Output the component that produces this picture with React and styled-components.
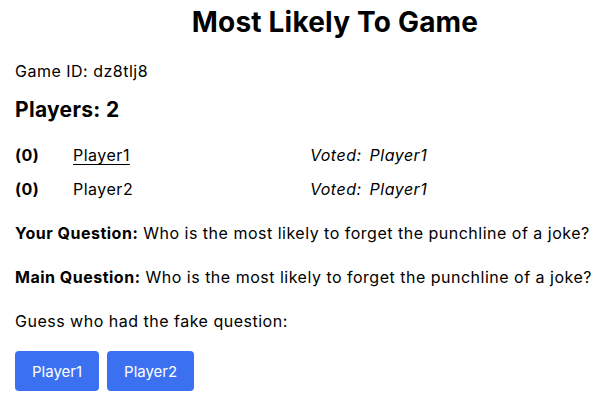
import React from 'react';
import styled, { createGlobalStyle } from 'styled-components';

const GlobalStyle = createGlobalStyle`
	body {
		margin: 0;
		background: #ffffff;
		color: #000000;
		font-family: Inter, 'Noto Sans', sans-serif;
	}
`;

const Page = styled.div`
	padding: 0 15px;
	font-size: 16px;
	letter-spacing: 0.5px;
`;

const Title = styled.h1`
	margin: 6px 0 0;
	padding-left: 62px;
	text-align: center;
	font-size: 28px;
	line-height: 32px;
	font-weight: 700;
	letter-spacing: 0.2px;
`;

const Text = styled.p`
	margin: ${(p) => p.$top || 16}px 0 0;
	line-height: 24px;
`;

const PlayersHeading = styled.h2`
	margin: 13px 0 0;
	font-size: 21px;
	line-height: 28px;
	font-weight: 700;
	letter-spacing: 0.3px;
`;

const PlayerList = styled.div`
	margin-top: 19px;
	display: flex;
	flex-direction: column;
	gap: 10px;
`;

const PlayerRow = styled.div`
	display: grid;
	grid-template-columns: 58px 237px 1fr;
	line-height: 24px;
`;

const Score = styled.span`
	font-weight: 700;
`;

const Name = styled.span`
	text-decoration: ${(p) => (p.$current ? 'underline' : 'none')};
	text-underline-offset: 3px;
`;

const Vote = styled.span`
	font-style: italic;
	word-spacing: 3px;
`;

const ButtonRow = styled.div`
	margin-top: 18px;
	display: flex;
	gap: 8px;
`;

const GuessButton = styled.button`
	height: 40px;
	padding: 0 17px;
	border: none;
	border-radius: 4px;
	background: #3b71f0;
	color: #ffffff;
	font-family: inherit;
	font-size: 15px;
	letter-spacing: 0;
	cursor: pointer;
`;

const players = [
	{ name: 'Player1', score: 0, voted: 'Player1', current: true },
	{ name: 'Player2', score: 0, voted: 'Player1' },
];

const question = 'Who is the most likely to forget the punchline of a joke?';

export default function App() {
	return (
		<>
			<GlobalStyle />
			<Page>
				<Title>Most Likely To Game</Title>
				<Text $top={21}>Game ID: dz8tlj8</Text>
				<PlayersHeading>Players: {players.length}</PlayersHeading>
				<PlayerList>
					{players.map((p) => (
						<PlayerRow key={p.name}>
							<Score>({p.score})</Score>
							<Name $current={p.current}>{p.name}</Name>
							<Vote>Voted: {p.voted}</Vote>
						</PlayerRow>
					))}
				</PlayerList>
				<Text $top={20}>
					<strong>Your Question:</strong> {question}
				</Text>
				<Text $top={20}>
					<strong>Main Question:</strong> {question}
				</Text>
				<Text $top={20}>Guess who had the fake question:</Text>
				<ButtonRow>
					{players.map((p) => (
						<GuessButton key={p.name}>{p.name}</GuessButton>
					))}
				</ButtonRow>
			</Page>
		</>
	);
}
